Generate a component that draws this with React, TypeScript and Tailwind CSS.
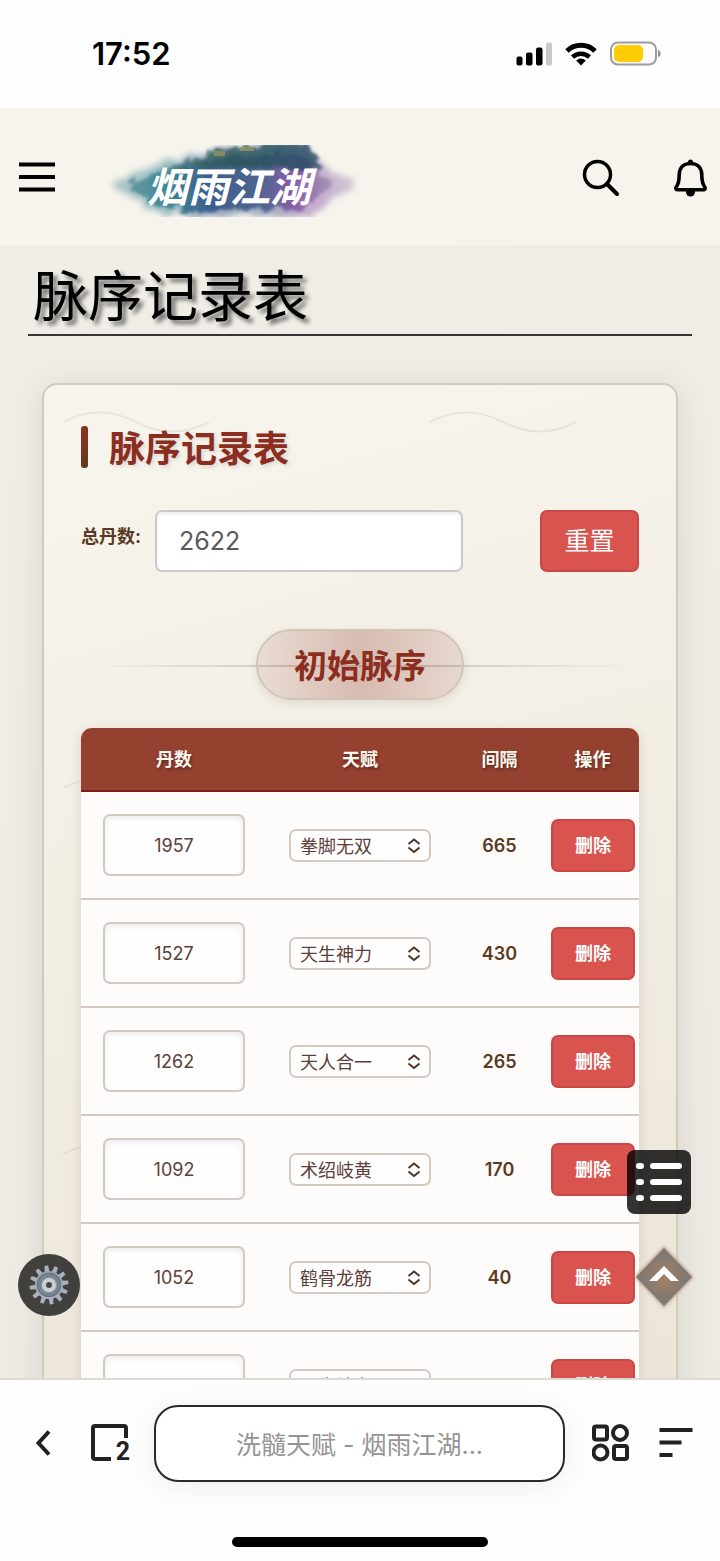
import React, { useState } from "react";

interface RecordRow {
  id: number;
  amount: string;
  talent: string;
  interval: string;
}

const talents = ["拳脚无双", "天生神力", "天人合一", "术绍岐黄", "鹤骨龙筋"];

const initialRows: RecordRow[] = [
  { id: 1, amount: "1957", talent: "拳脚无双", interval: "665" },
  { id: 2, amount: "1527", talent: "天生神力", interval: "430" },
  { id: 3, amount: "1262", talent: "天人合一", interval: "265" },
  { id: 4, amount: "1092", talent: "术绍岐黄", interval: "170" },
  { id: 5, amount: "1052", talent: "鹤骨龙筋", interval: "40" },
  { id: 6, amount: "", talent: "天生神力", interval: "" },
];

const gearTeeth = [0, 30, 60, 90, 120, 150, 180, 210, 240, 270, 300, 330];

function StatusBar() {
  return (
    <div className="flex h-[108px] shrink-0 items-center justify-between bg-[#fefefe] pr-[59px] pl-[92px]">
      <span className="text-[31px] leading-8 font-semibold text-black">17:52</span>
      <div className="flex items-center gap-[13px]">
        <svg width="36" height="24" viewBox="0 0 36 24">
          <rect x="0.5" y="14.5" width="6" height="9" rx="2" />
          <rect x="10" y="10.5" width="6.5" height="13" rx="2" />
          <rect x="20" y="5.5" width="6.500" height="18" rx="2" />
          <rect x="30" y="0.5" width="6" height="23" rx="2" fill="#c9c9c9" />
        </svg>
        <svg width="32" height="24" viewBox="0 0 32 24" fill="none" stroke="#000" strokeWidth="5">
          <path d="M2 9 A20 20 0 0 1 30 9" />
          <path d="M7.500 15 A12.500 12.500 0 0 1 24.500 15" strokeWidth="4.500" />
          <path d="M16 23.500 L11.200 18.400 A7 7 0 0 1 20.800 18.400 Z" fill="#000" stroke="none" />
        </svg>
        <svg width="51" height="26" viewBox="0 0 51 26">
          <rect x="1" y="1.5" width="45" height="22" rx="7" fill="#fff" stroke="#9c9c9c" strokeWidth="2" />
          <rect x="4" y="4" width="29" height="17" rx="5" fill="#ffcc05" />
          <path d="M48 9 Q50.500 9.500 50.500 12.500 Q50.500 15.500 48 16 Z" fill="#8d8d8d" />
        </svg>
      </div>
    </div>
  );
}

function Logo() {
  return (
    <svg width="256" height="76" viewBox="0 0 256 76" role="img" aria-label="烟雨江湖">
      <defs>
        <linearGradient id="ink" x1="0" x2="1" y1="0" y2="0">
          <stop offset="0" stopColor="#5f93a0" />
          <stop offset="0.2" stopColor="#2f7f8c" />
          <stop offset="0.42" stopColor="#2c4f86" />
          <stop offset="0.65" stopColor="#3f5a88" />
          <stop offset="0.82" stopColor="#8650a8" />
          <stop offset="1" stopColor="#9d94b0" />
        </linearGradient>
        <linearGradient id="hills" x1="0" x2="1" y1="0" y2="0">
          <stop offset="0" stopColor="#4c8087" />
          <stop offset="0.4" stopColor="#2d5a57" />
          <stop offset="1" stopColor="#1f4a62" />
        </linearGradient>
        <filter id="brush" x="-10%" y="-20%" width="120%" height="140%">
          <feTurbulence type="fractalNoise" baseFrequency="0.09" numOctaves="4" seed="4" />
          <feDisplacementMap in="SourceGraphic" scale="14" xChannelSelector="R" yChannelSelector="G" />
          <feGaussianBlur stdDeviation="1.5" />
        </filter>
        <filter id="mist" x="-10%" y="-20%" width="120%" height="140%">
          <feTurbulence type="fractalNoise" baseFrequency="0.06" numOctaves="4" seed="9" />
          <feDisplacementMap in="SourceGraphic" scale="18" xChannelSelector="R" yChannelSelector="G" />
          <feGaussianBlur stdDeviation="3" />
        </filter>
        <clipPath id="logo-clip">
          <rect x="0" y="2" width="256" height="72" />
        </clipPath>
      </defs>
      <g clipPath="url(#logo-clip)">
        <path
          d="M6 42 Q50 14 95 12 Q150 -6 200 4 Q216 24 250 40 Q220 60 208 74 Q150 72 110 74 Q60 76 45 66 Z"
          fill="url(#ink)"
          opacity="0.45"
          filter="url(#mist)"
        />
        <path
          d="M20 42 Q55 26 92 20 Q130 10 194 12 Q210 26 226 42 Q208 58 192 68 Q150 64 120 68 Q70 70 50 60 Z"
          fill="url(#ink)"
          opacity="0.85"
          filter="url(#brush)"
        />
        <path
          d="M50 28 Q80 18 98 14 Q110 4 135 4 L202 -2 Q212 12 214 28 Q180 20 150 26 Q120 22 92 26 Z"
          fill="url(#hills)"
          opacity="0.8"
          filter="url(#brush)"
        />
        <path d="M108 8 h11 v5 h-11 Z M134 4 h14 v4 h-14 Z" fill="#a3985a" opacity="0.7" />
      </g>
      <text
        x="41"
        y="59"
        fill="#fff"
        fontSize="41"
        fontStyle="italic"
        fontWeight="700"
        fontFamily="'Noto Sans CJK SC', sans-serif"
      >
        烟雨江湖
      </text>
    </svg>
  );
}

function SiteHeader() {
  return (
    <header className="flex h-[137px] shrink-0 items-center bg-[#f7f4ed] pr-[13px] pl-[19px]">
      <button type="button" aria-label="菜单">
        <svg width="36" height="30" viewBox="0 0 36 30">
          <path d="M0 2.500 H36 M0 15 H36 M0 27.500 H36" stroke="#000" strokeWidth="4" />
        </svg>
      </button>
      <a href="#" className="ml-[51px] pt-2">
        <Logo />
      </a>
      <div className="ml-auto flex items-center gap-[54px] pt-[3px]">
        <button type="button" aria-label="搜索">
          <svg width="38" height="38" viewBox="0 0 38 38" fill="none" stroke="#000" strokeWidth="3.500">
            <circle cx="15.500" cy="15.500" r="13" />
            <path d="M25 25 L35 35" strokeLinecap="round" strokeWidth="4" />
          </svg>
        </button>
        <button type="button" aria-label="通知">
          <svg width="33" height="38" viewBox="0 0 33 38">
            <circle cx="16.500" cy="3" r="2.500" />
            <path
              d="M16.500 4.500 C9.500 4.500 5.200 9 5.200 16 C5.200 22.500 4.600 24.800 2.400 27.800 C1.400 29.400 2 30.800 3.800 30.800 H29.200 C31 30.800 31.600 29.400 30.600 27.800 C28.400 24.800 27.800 22.500 27.800 16 C27.800 9 23.500 4.500 16.500 4.500 Z"
              fill="none"
              stroke="#000"
              strokeWidth="3.600"
            />
            <path d="M12 31 H21 V33 A4.500 4.500 0 0 1 12 33 Z" />
          </svg>
        </button>
      </div>
    </header>
  );
}

interface RowProps {
  row: RecordRow;
  onChange: (row: RecordRow) => void;
  onDelete: (id: number) => void;
}

function RecordTableRow({ row, onChange, onDelete }: RowProps) {
  return (
    <tr className="bg-[#fdfcfa]">
      <td className="h-[108px] border-b-2 border-[#d3cac1] px-[22px]">
        <input
          type="text"
          aria-label="丹数"
          value={row.amount}
          onChange={(e) => onChange({ ...row, amount: e.target.value })}
          className="block h-[62px] w-full rounded-[7px] border-2 border-[#d3cac1] bg-[#fefefe] text-center text-[18px] text-[#5d4037] shadow-[inset_0_2px_6px_rgba(0,0,0,0.08)]"
        />
      </td>
      <td className="border-b-2 border-[#d3cac1] px-[22px]">
        <div className="relative">
          <select
            aria-label="天赋"
            value={row.talent}
            onChange={(e) => onChange({ ...row, talent: e.target.value })}
            className="block h-[33px] w-full appearance-none rounded-[7px] border-2 border-[#d3cac1] bg-[#fefefe] pt-[2px] pl-[9px] text-[18px] text-[#5d4037]"
          >
            {talents.map((talent) => (
              <option key={talent} value={talent}>
                {talent}
              </option>
            ))}
          </select>
          <svg
            className="pointer-events-none absolute top-[9px] right-[10px]"
            width="14"
            height="15"
            viewBox="0 0 14 15"
            fill="none"
            stroke="#4e3629"
            strokeWidth="2"
          >
            <path d="M1.500 6 L7 1.500 L12.500 6 M1.500 9.500 L7 14 L12.500 9.500" />
          </svg>
        </div>
      </td>
      <td className="border-b-2 border-[#d3cac1] text-center text-[18px] font-semibold text-[#5b3a24]">
        {row.interval}
      </td>
      <td className="border-b-2 border-[#d3cac1] pr-1 pl-[5px]">
        <button
          type="button"
          onClick={() => onDelete(row.id)}
          className="block h-[53px] w-full rounded-[7px] border-2 border-[#cb4745] bg-[#d9534f] text-[18px] font-bold text-white"
        >
          删除
        </button>
      </td>
    </tr>
  );
}

function RecordTable() {
  const [rows, setRows] = useState<RecordRow[]>(initialRows);

  const handleChange = (next: RecordRow) =>
    setRows(rows.map((row) => (row.id === next.id ? next : row)));
  const handleDelete = (id: number) => setRows(rows.filter((row) => row.id !== id));

  return (
    <div className="mt-7 overflow-hidden rounded-[11px] shadow-[0_3px_12px_rgba(93,64,55,0.16)]">
      <table className="w-full table-fixed border-separate border-spacing-0">
        <thead>
          <tr className="h-16 bg-[#954130] text-[18px] text-[#fdf8f0] [text-shadow:1px_2px_3px_rgba(0,0,0,0.4)]">
            <th className="w-1/3 border-b-2 border-[#7d1f16] font-bold">丹数</th>
            <th className="w-1/3 border-b-2 border-[#7d1f16] font-bold">天赋</th>
            <th className="w-1/6 border-b-2 border-[#7d1f16] font-bold">间隔</th>
            <th className="w-1/6 border-b-2 border-[#7d1f16] font-bold">操作</th>
          </tr>
        </thead>
        <tbody>
          {rows.map((row) => (
            <RecordTableRow key={row.id} row={row} onChange={handleChange} onDelete={handleDelete} />
          ))}
        </tbody>
      </table>
    </div>
  );
}

function RecordCard() {
  const [total, setTotal] = useState("2622");

  return (
    <section className="relative mx-[42px] mt-[47px] rounded-[15px] border-2 border-[#d3cabd] bg-[linear-gradient(165deg,#f8f5ee_0%,#f2eee4_45%,#ebe3d6_100%)] px-[37px] pt-[41px] pb-10 shadow-[0_6px_30px_rgba(90,90,70,0.15)]">
      <svg className="absolute inset-0 h-full w-full" aria-hidden="true">
        <defs>
          <pattern id="waves" width="367" height="366" patternUnits="userSpaceOnUse">
            <path
              d="M19 37 Q55.500 18 92 37 T165 37"
              fill="none"
              stroke="#8b7d6b"
              strokeOpacity="0.12"
              strokeWidth="2"
            />
          </pattern>
        </defs>
        <rect width="100%" height="100%" fill="url(#waves)" />
      </svg>
      <div className="relative">
        <h2 className="flex h-[42px] items-center gap-[21px] text-[36px] leading-[42px] font-bold text-[#8b2e1f] [text-shadow:2px_2px_4px_rgba(0,0,0,0.12)]">
          <span className="h-[42px] w-[7px] rounded-[3px] bg-linear-to-b from-[#8e2f20] to-[#5f3a22]" />
          <span className="pt-[3px]">脉序记录表</span>
        </h2>

        <form className="mt-[42px] flex items-start" onSubmit={(e) => e.preventDefault()}>
          <label
            htmlFor="total"
            className="w-[74px] shrink-0 pt-[17px] text-[18px] leading-5 font-bold whitespace-nowrap text-[#5b3a24]"
          >
            总丹数:
          </label>
          <input
            id="total"
            type="text"
            value={total}
            onChange={(e) => setTotal(e.target.value)}
            className="mr-[77px] h-[62px] min-w-0 flex-1 rounded-[7px] border-2 border-[#cac9c9] bg-white px-[22px] text-[25px] text-[#5a5a5a] shadow-[inset_0_2px_3px_rgba(0,0,0,0.08)]"
          />
          <button
            type="button"
            onClick={() => setTotal("")}
            className="h-[62px] w-[99px] rounded-[7px] border-2 border-[#cb4745] bg-[#d9534f] pt-[2px] text-[25px] text-white"
          >
            重置
          </button>
        </form>

        <div className="mt-[57px] flex justify-center bg-[linear-gradient(90deg,transparent_2%,#d3cabd_35%,#d3cabd_65%,transparent_98%)] bg-[length:100%_2px] bg-[position:0_36px] bg-no-repeat">
          <h3 className="h-[71px] rounded-full border-2 border-[#cfc6b9] bg-[linear-gradient(90deg,rgba(139,46,31,0.1),rgba(139,46,31,0.28)_50%,rgba(139,46,31,0.12))] px-9 text-[33px] leading-[70px] font-bold text-[#8b2e1f] shadow-[0_3px_8px_rgba(90,70,50,0.14)]">
            初始脉序
          </h3>
        </div>

        <RecordTable />
      </div>
    </section>
  );
}

function FloatingButtons() {
  return (
    <>
      <button
        type="button"
        aria-label="目录"
        className="absolute right-[29px] bottom-[164px] flex h-16 w-16 items-center justify-center rounded-lg bg-black/80"
      >
        <svg width="46" height="40" viewBox="0 0 46 40" fill="#fff">
          <path d="M3 1 H5 A3 3 0 0 1 5 7 H3 A3 3 0 0 1 3 1 Z M3 17 H5 A3 3 0 0 1 5 23 H3 A3 3 0 0 1 3 17 Z M3 33 H5 A3 3 0 0 1 5 39 H3 A3 3 0 0 1 3 33 Z" />
          <path d="M17 1 H43 A3 3 0 0 1 43 7 H17 A3 3 0 0 1 17 1 Z M17 17 H43 A3 3 0 0 1 43 23 H17 A3 3 0 0 1 17 17 Z M17 33 H43 A3 3 0 0 1 43 39 H17 A3 3 0 0 1 17 33 Z" />
        </svg>
      </button>
      <button type="button" aria-label="返回顶部" className="absolute right-[25px] bottom-[69px]">
        <svg width="62" height="64" viewBox="0 0 62 64">
          <defs>
            <radialGradient id="glow" r="0.4">
              <stop offset="0" stopColor="#a67d5e" />
              <stop offset="1" stopColor="#7a7772" />
            </radialGradient>
            <filter id="halo" x="-20%" y="-20%" width="140%" height="140%">
              <feGaussianBlur stdDeviation="1.500" />
            </filter>
          </defs>
          <path d="M31 1 L61 32 L31 63 L1 32 Z" fill="#b58f76" opacity="0.7" filter="url(#halo)" />
          <path d="M31 3 L59 32 L31 61 L3 32 Z" fill="url(#glow)" opacity="0.95" />
          <path d="M16 36 L31 21 L46 36 H38 L31 29 L24 36 Z" fill="#fff" />
        </svg>
      </button>
      <button
        type="button"
        aria-label="设置"
        className="absolute bottom-[62px] left-[18px] flex h-[62px] w-[62px] items-center justify-center rounded-full bg-[#41403d]"
      >
        <svg width="40" height="40" viewBox="-20 -20 40 40">
          <defs>
            <linearGradient id="steel" x1="0" x2="0" y1="0" y2="1">
              <stop offset="0" stopColor="#8fa0ad" />
              <stop offset="1" stopColor="#b4b5c4" />
            </linearGradient>
          </defs>
          {gearTeeth.map((angle) => (
            <path key={angle} d="M-2.500 -12 L-1.800 -19.500 H1.800 L2.500 -12 Z" fill="#a9b1be" transform={`rotate(${angle - 8})`} />
          ))}
          <circle r="14" fill="url(#steel)" />
          <circle r="11.500" fill="#7f8c97" stroke="#66727c" strokeWidth="1.500" />
          <circle r="9" fill="#8b98a2" stroke="#6a7680" />
          <circle r="5" fill="#4a4643" stroke="#c9d0d6" strokeWidth="4" />
        </svg>
      </button>
    </>
  );
}

function BrowserBar() {
  return (
    <footer className="h-[183px] shrink-0 border-t-2 border-[#dcdad7] bg-[#fefefe] pt-[25px]">
      <div className="flex items-center pr-[27px] pl-[35px]">
        <button type="button" aria-label="后退">
          <svg width="16" height="28" viewBox="0 0 16 28" fill="none" stroke="#222" strokeWidth="4">
            <path d="M14 1.500 L3.500 13 L14 24.500" />
          </svg>
        </button>
        <button type="button" className="relative ml-10">
          <svg width="39" height="40" viewBox="0 0 39 40" fill="none" stroke="#222" strokeWidth="4">
            <path d="M20 35 H4 Q2 35 2 33 V4 Q2 2 4 2 H33 Q35 2 35 4 V14" />
          </svg>
          <span className="absolute right-0 bottom-[2px] font-['Roboto'] text-[25px] leading-5 font-bold text-[#222]">
            2
          </span>
        </button>
        <button
          type="button"
          className="mx-6 h-[77px] min-w-0 flex-1 truncate rounded-[24px] border-2 border-[#2a2a2a] bg-white px-6 pt-1 text-[25px] text-[#949494] shadow-[0_4px_32px_rgba(0,0,0,0.07)]"
        >
          洗髓天赋 - 烟雨江湖...
        </button>
        <button type="button" aria-label="应用" className="ml-[3px]">
          <svg width="38" height="40" viewBox="0 0 38 40" fill="none" stroke="#222" strokeWidth="4">
            <rect x="2" y="2.500" width="13" height="13" rx="2" />
            <circle cx="28" cy="9" r="7" />
            <circle cx="8.500" cy="28.500" r="7" />
            <rect x="22" y="22" width="13" height="13" rx="2" />
          </svg>
        </button>
        <button type="button" aria-label="更多" className="ml-[29px]">
          <svg width="34" height="34" viewBox="0 0 34 34" stroke="#222" strokeWidth="4">
            <path d="M0.500 3 H33.500 M0.500 15.500 H22.500 M0.500 28 H13.500" />
          </svg>
        </button>
      </div>
      <div className="mx-auto mt-[55px] h-[10px] w-64 rounded-full bg-black" />
    </footer>
  );
}

function App() {
  return (
    <div className="flex h-screen flex-col overflow-hidden font-['Inter','Noto_Sans_CJK_SC',sans-serif]">
      <StatusBar />
      <SiteHeader />
      <div className="relative min-h-0 flex-1">
        <main className="h-full overflow-y-auto bg-[linear-gradient(160deg,#f1eee7,#eeece5_50%,#eceae2)] [scrollbar-width:none]">
          <h1 className="mx-7 border-b-2 border-[#3a3434] px-[5px] pt-[15px] pb-[2px] text-[55px] leading-[72px] text-black [text-shadow:4px_4px_4px_rgba(0,0,0,0.55)]">
            脉序记录表
          </h1>
          <RecordCard />
        </main>
        <FloatingButtons />
      </div>
      <BrowserBar />
    </div>
  );
}

export default App;
